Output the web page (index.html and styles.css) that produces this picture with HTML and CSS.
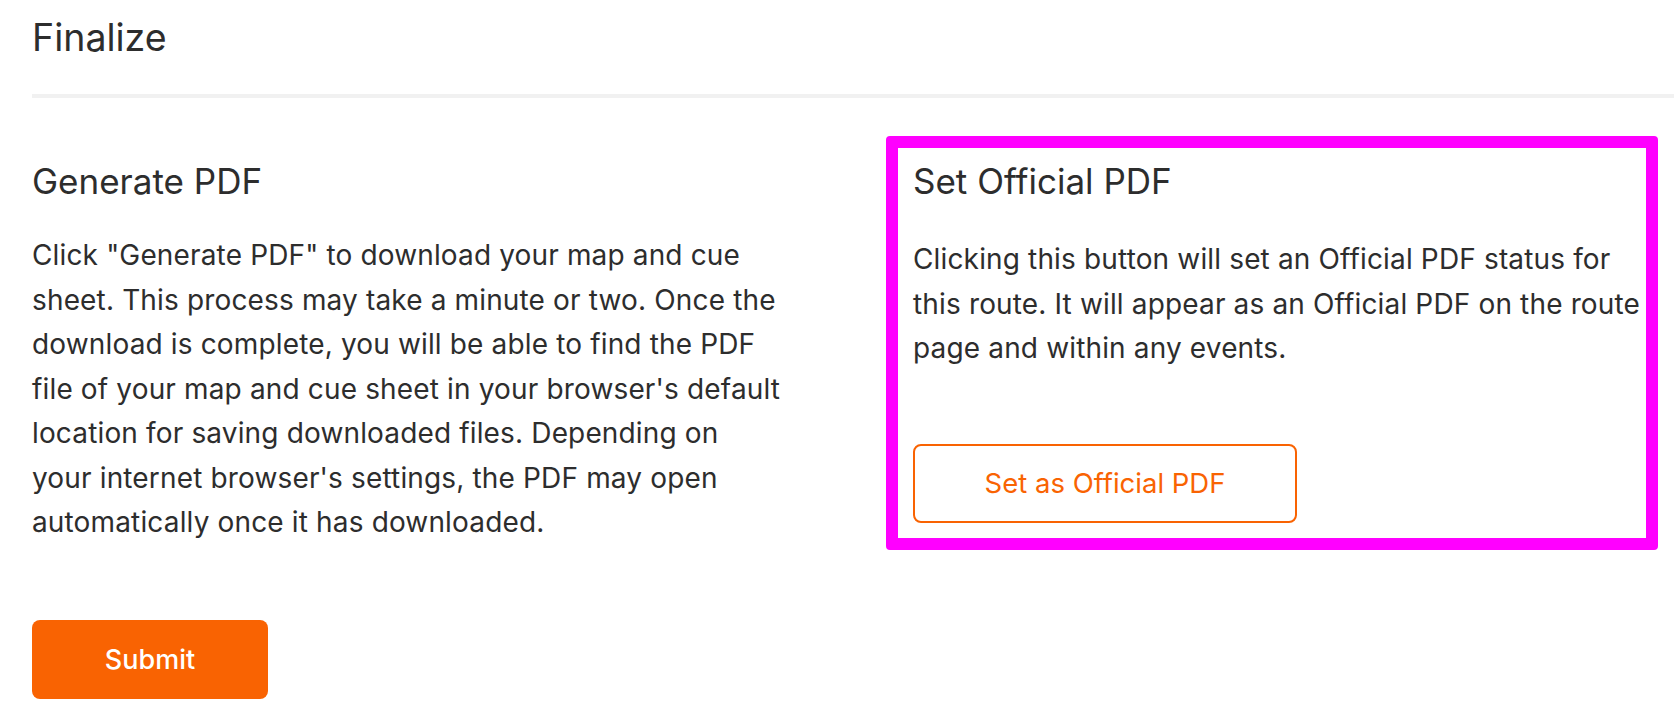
FILE: index.html
```html
<!DOCTYPE html>
<html lang="en">
<head>
    <meta charset="UTF-8">
    <meta name="viewport" content="width=device-width, initial-scale=1.0">
    <title>Finalize</title>
    <link rel="stylesheet" href="styles.css">
</head>
<body>
    <div class="page">
        <h1>Finalize</h1>
        <div class="divider"></div>
        <div class="row">
            <div class="col generate">
                <h3>Generate PDF</h3>
                <p>Click "Generate PDF" to download your map and cue<br>
                sheet. This process may take a minute or two. Once the<br>
                download is complete, you will be able to find the PDF<br>
                file of your map and cue sheet in your browser's default<br>
                location for saving downloaded files. Depending on<br>
                your internet browser's settings, the PDF may open<br>
                automatically once it has downloaded.</p>
            </div>
            <div class="col official">
                <h3>Set Official PDF</h3>
                <p>Clicking this button will set an Official PDF status for<br>
                this route. It will appear as an Official PDF on the route<br>
                page and within any events.</p>
                <button class="btn-outline">Set as Official PDF</button>
            </div>
        </div>
        <button class="btn-submit">Submit</button>
    </div>
</body>
</html>
```

FILE: styles.css
```css
body {
    margin: 0;
    font-family: Inter, "Noto Sans", sans-serif;
    background-color: #fff;
    color: #2d2d2d;
}
.page {
    padding-left: 32px;
}
h1 {
    margin: 15px 0 0;
    font-size: 37.5px;
    line-height: 46px;
    font-weight: 400;
}
.divider {
    height: 4px;
    margin-top: 33px;
    background: #f1f1f1;
}
.row {
    display: flex;
    align-items: flex-start;
}
.col h3 {
    margin: 0;
    font-size: 35px;
    line-height: 41px;
    font-weight: 400;
}
.col p {
    margin: 0;
    font-size: 28px;
    line-height: 44.5px;
    letter-spacing: 0.15px;
}
.generate {
    width: 790px;
    padding-top: 63px;
}
.generate p {
    margin-top: 31px;
}
.official {
    width: 733px;
    margin-top: 38px;
    margin-left: 64px;
    padding: 13px 0 15px 15px;
    border: 12px solid #ff00ff;
    border-radius: 4px;
}
.official p {
    margin-top: 35px;
    margin-right: -10px;
}
.btn-outline {
    display: block;
    width: 384px;
    height: 79px;
    margin-top: 73px;
    border: 2px solid #f96302;
    border-radius: 8px;
    background: #fff;
    color: #f96302;
    font-family: inherit;
    font-size: 27.5px;
    cursor: pointer;
}
.btn-submit {
    display: block;
    width: 236px;
    height: 79px;
    margin-top: 70px;
    border: none;
    border-radius: 8px;
    background: #f96302;
    color: #fff;
    font-family: inherit;
    font-size: 27px;
    font-weight: 500;
    cursor: pointer;
}
```
